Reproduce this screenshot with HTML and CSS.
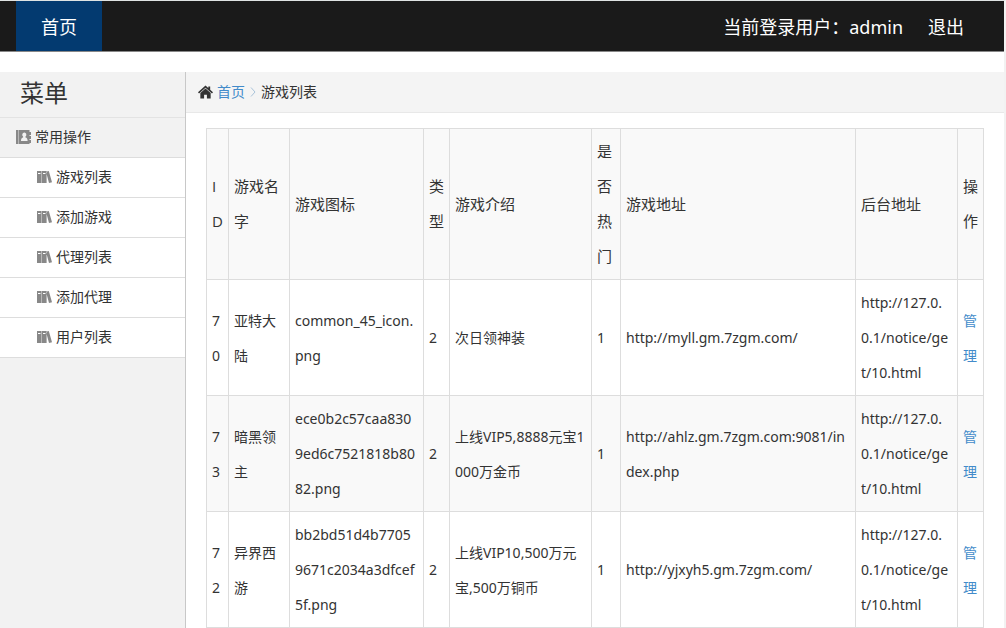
FILE: index.html
```html
<!DOCTYPE html>
<html lang="zh-CN">
<head>
<meta charset="utf-8">
<meta name="viewport" content="width=device-width, initial-scale=1">
<title>游戏列表</title>
<link rel="stylesheet" href="styles.css">
</head>
<body>
<svg class="sprite" aria-hidden="true">
  <symbol id="icon-books" viewBox="0 0 15 12">
    <path fill-rule="evenodd" d="M0 0h4.600v12H0zM1 2v1h2.500V2zM5 0h4.600v12H5zM6 2v1h2.500V2zM9 .8L11.800 0 15 11.200l-3 .8z"/>
  </symbol>
  <symbol id="icon-contacts" viewBox="0 0 15 15">
    <path fill-rule="evenodd" d="M0 1h2.500v14H0zM2.500 1H13.500v2H15v3h-1.500v1H15v3h-1.500v1H15v3h-1.500v1H2.500zM8.300 3.500a2 2.200 0 0 0-1.200 4v1C5.800 8.700 5 9.600 5 12h6.600c0-2.400-.8-3.300-2.100-3.500v-1a2 2.200 0 0 0-1.200-4z"/>
    <path fill="#b8b8b8" d="M2 1h1v14H2z"/>
  </symbol>
  <symbol id="icon-home" viewBox="0 0 16 14">
    <path d="M8 0l3 2.700V1h2v3.500l3 2.700-1.100 1.300L8 2.500 1.100 8.500 0 7.200z"/>
    <path d="M8 3.300l5.500 4.700V14H9.500v-4h-3v4h-4V8z"/>
  </symbol>
</svg>

<header class="topbar">
  <nav class="topbar-nav"><a class="nav-link active" href="#">首页</a></nav>
  <div class="topbar-user">
    <span>当前登录用户：admin</span>
    <a class="logout" href="#">退出</a>
  </div>
</header>

<div class="layout">
  <aside class="sidebar">
    <h1 class="sidebar-title">菜单</h1>
    <h2 class="menu-group"><svg class="icon-contacts"><use href="#icon-contacts"/></svg>常用操作</h2>
    <ul class="menu">
      <li><a href="#"><svg class="icon-books"><use href="#icon-books"/></svg>游戏列表</a></li>
      <li><a href="#"><svg class="icon-books"><use href="#icon-books"/></svg>添加游戏</a></li>
      <li><a href="#"><svg class="icon-books"><use href="#icon-books"/></svg>代理列表</a></li>
      <li><a href="#"><svg class="icon-books"><use href="#icon-books"/></svg>添加代理</a></li>
      <li><a href="#"><svg class="icon-books"><use href="#icon-books"/></svg>用户列表</a></li>
    </ul>
  </aside>

  <main class="main">
    <nav class="breadcrumb">
      <svg class="icon-home"><use href="#icon-home"/></svg>
      <a href="#">首页</a>
      <svg class="icon-sep" viewBox="0 0 6 10"><path d="M1 .5L5 5 1 9.500"/></svg>
      <span>游戏列表</span>
    </nav>
    <div class="content">
      <table class="games">
        <colgroup>
          <col class="col-id"><col class="col-name"><col class="col-icon"><col class="col-type"><col class="col-intro"><col class="col-hot"><col><col class="col-admin"><col class="col-action">
        </colgroup>
        <thead>
          <tr><th>ID</th><th>游戏名字</th><th>游戏图标</th><th>类型</th><th>游戏介绍</th><th>是否热门</th><th>游戏地址</th><th>后台地址</th><th>操作</th></tr>
        </thead>
        <tbody>
          <tr><td>70</td><td>亚特大陆</td><td>common_45_icon.png</td><td>2</td><td>次日领神装</td><td>1</td><td>http://myll.gm.7zgm.com/</td><td>http://127.0.<wbr>0.1/notice/get/10.html</td><td><a href="#">管理</a></td></tr>
          <tr><td>73</td><td>暗黑领主</td><td>ece0b2c57caa8309ed6c7521818b8082.png</td><td>2</td><td>上线VIP5,8888元宝1000万金币</td><td>1</td><td>http://ahlz.gm.7zgm.com:9081/index.php</td><td>http://127.0.<wbr>0.1/notice/get/10.html</td><td><a href="#">管理</a></td></tr>
          <tr><td>72</td><td>异界西游</td><td>bb2bd51d4b77059671c2034a3dfcef5f.png</td><td>2</td><td>上线VIP10,500万元宝,500万铜币</td><td>1</td><td>http://yjxyh5.gm.7zgm.com/</td><td>http://127.0.<wbr>0.1/notice/get/10.html</td><td><a href="#">管理</a></td></tr>
        </tbody>
      </table>
    </div>
  </main>
</div>
</body>
</html>
```
FILE: styles.css
```css
* { box-sizing: border-box; }

body {
  margin: 0;
  min-height: 100vh;
  display: flex;
  flex-direction: column;
  border-top: 1px solid #dfe3e3;
  border-right: 2px solid #f2f2f2;
  background: #fff;
  color: #333;
  font: 14px/20px "Noto Sans", "Noto Sans CJK SC", sans-serif;
}

a { color: #428bca; text-decoration: none; }
svg { flex: none; fill: currentColor; }
.sprite { position: absolute; width: 0; height: 0; }

.topbar {
  display: flex;
  justify-content: space-between;
  height: 51px;
  margin-bottom: 20px;
  padding: 0 40px 0 16px;
  border-bottom: 1px solid #888;
  background: #1a1a1a;
  color: #fff;
  font-size: 18px;
  line-height: 52px;
}
.topbar-nav { display: flex; }
.nav-link { padding: 0 25px; color: #fff; }
.nav-link.active { background: #033a70; }
.topbar-user { display: flex; gap: 25px; }
.logout { color: #fff; }

.layout { flex: 1; display: flex; }

.sidebar {
  flex: none;
  width: 186px;
  border-right: 1px solid #c8c8c8;
  background: #f2f2f2;
}
.sidebar-title {
  margin: 0;
  padding: 0 20px 4px;
  border-bottom: 1px solid #e3e3e3;
  font-size: 24px;
  font-weight: 400;
  line-height: 41px;
}
.menu-group {
  display: flex;
  align-items: center;
  gap: 4px;
  margin: 0;
  padding: 0 16px 2px;
  border-bottom: 1px solid #ddd;
  font-size: 14px;
  font-weight: 400;
  line-height: 37px;
}
.icon-contacts { width: 15px; height: 15px; color: #888; }
.menu { margin: 0; padding: 0; list-style: none; }
.menu a {
  display: flex;
  align-items: center;
  gap: 4px;
  padding: 0 37px 2px;
  border-bottom: 1px solid #ddd;
  background: #fff;
  color: #333;
  line-height: 37px;
}
.icon-books { width: 15px; height: 12px; color: #888; }

.main { flex: 1; min-width: 0; }
.breadcrumb {
  display: flex;
  align-items: center;
  gap: 4px;
  padding: 0 12px;
  border-bottom: 1px solid #e8e8e8;
  background: #f4f4f4;
  line-height: 40px;
}
.icon-home { width: 15px; height: 14px; }
.icon-sep { width: 8px; height: 10px; fill: none; stroke: #a9c3d9; }

.content { padding: 15px 20px 0; }
.games {
  width: 100%;
  table-layout: fixed;
  border-collapse: collapse;
  line-height: 35px;
  word-break: break-all;
}
.games th, .games td {
  padding: 5px;
  border: 1px solid #ddd;
  text-align: left;
  vertical-align: middle;
}
.games th {
  background: #f9f9f9;
  font-family: "Open Sans", "Noto Sans CJK SC", sans-serif;
  font-size: 15px;
  font-weight: 400;
}
.games tbody tr:nth-child(even) { background: #f9f9f9; }
.col-id { width: 22px; }
.col-name { width: 61px; }
.col-icon { width: 134px; }
.col-type, .col-action { width: 26px; }
.col-intro { width: 142px; }
.col-hot { width: 29px; }
.col-admin { width: 102px; }
```
